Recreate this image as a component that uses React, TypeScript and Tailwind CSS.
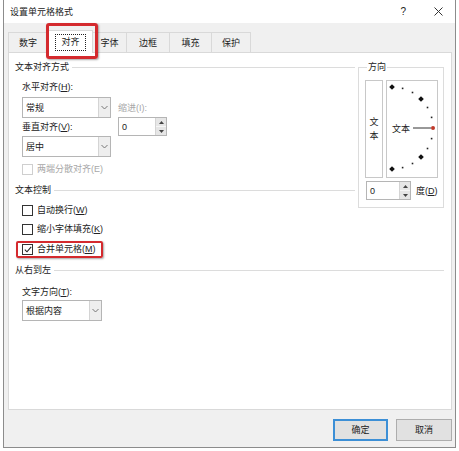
import React from 'react';

const tabs = ['数字', '对齐', '字体', '边框', '填充', '保护'];
const tabWidths = ['w-[40px]', 'w-[45px]', 'w-[34px]', 'w-[43px]', 'w-[42px]', 'w-[39px]'];

function Key({ k }: { k: string }) {
  return <span className="underline underline-offset-1">{k}</span>;
}

function Header({ text, className = '' }: { text: string; className?: string }) {
  return (
    <div className={`flex items-center h-[12px] ${className}`}>
      <span>{text}</span>
      <div className="ml-[3px] flex-1 h-px bg-[#dcdcdc]" />
    </div>
  );
}

function Chevron() {
  return (
    <svg width="7" height="5" viewBox="0 0 7 5">
      <path d="M0.5 1 L3.5 4 L6.5 1" fill="none" stroke="#777" strokeWidth="1" />
    </svg>
  );
}

function Select({ value, width }: { value: string; width: string }) {
  return (
    <div className={`flex ${width} h-[21px] border border-[#b5b5b5] bg-white`}>
      <div className="flex-1 flex items-center pl-[3px]">{value}</div>
      <div className="w-[12px] flex items-center justify-center bg-[#eeeeee] border-l border-[#d4d4d4]">
        <Chevron />
      </div>
    </div>
  );
}

function Spinner({ width }: { width: string }) {
  return (
    <div className={`flex ${width} h-[19px] border border-[#b5b5b5] bg-white`}>
      <div className="flex-1 flex items-center pl-[3px]">0</div>
      <div className="w-[11px] flex flex-col bg-[#e6e6e6] border-l border-[#d4d4d4]">
        <div className="flex-1 flex items-center justify-center border-b border-[#f6f6f6]">
          <svg width="5" height="3" viewBox="0 0 5 3"><path d="M0 3 L2.5 0 L5 3 Z" fill="#444" /></svg>
        </div>
        <div className="flex-1 flex items-center justify-center">
          <svg width="5" height="3" viewBox="0 0 5 3"><path d="M0 0 L2.5 3 L5 0 Z" fill="#444" /></svg>
        </div>
      </div>
    </div>
  );
}

function Check({ label, checked = false, disabled = false, className = '' }: { label: React.ReactNode; checked?: boolean; disabled?: boolean; className?: string }) {
  return (
    <div className={`flex items-center h-[12px] pl-[7px] ${disabled ? 'text-[#a8a8a8]' : ''} ${className}`}>
      <div className={`w-[11px] h-[11px] border bg-white flex items-center justify-center ${disabled ? 'border-[#cfcfcf]' : 'border-[#333]'}`}>
        {checked && (
          <svg width="8" height="7" viewBox="0 0 8 7">
            <path d="M0.8 3.6 L3 5.8 L7.2 0.8" fill="none" stroke="#222" strokeWidth="1.1" />
          </svg>
        )}
      </div>
      <span className="ml-[4px]">{label}</span>
    </div>
  );
}

function Dial() {
  const cx = 5;
  const cy = 47;
  const r = 41;
  const marks: React.ReactNode[] = [];
  for (let a = -90; a <= 90; a += 15) {
    const rad = (a * Math.PI) / 180;
    const x = cx + r * Math.cos(rad);
    const y = cy - r * Math.sin(rad);
    if (a === 0) {
      marks.push(<circle key={a} cx={x} cy={y} r={2} fill="#c0392b" />);
    } else if (a % 45 === 0) {
      marks.push(<rect key={a} x={x - 2} y={y - 2} width={4} height={4} fill="#111" transform={`rotate(45 ${x} ${y})`} />);
    } else {
      marks.push(<rect key={a} x={x - 0.8} y={y - 0.8} width={1.6} height={1.6} fill="#222" />);
    }
  }
  return (
    <svg width="50" height="96" viewBox="0 0 50 96">
      {marks}
      <text x="5" y="51" fontSize="9" fill="#222" fontFamily="Noto Sans CJK SC, sans-serif">文本</text>
      <line x1="26" y1="47" x2="44" y2="47" stroke="#333" strokeWidth="1" />
    </svg>
  );
}

export default function App() {
  return (
    <div className="w-[459px] h-[451px] bg-white text-[9px] leading-[12px] text-[#222] font-['Liberation_Sans','Noto_Sans_CJK_SC',sans-serif]">
      <div className="ml-[3px] w-[453px] h-[448px] flex flex-col bg-[#f0f0f0] border-x border-b border-[#8c8c8c]">
        {/* Title bar */}
        <div className="h-[23px] bg-white flex items-center pl-[6px] pr-[12px] shrink-0">
          <span className="flex-1">设置单元格格式</span>
          <span className="text-[10px] mr-[28px]">?</span>
          <svg width="9" height="9" viewBox="0 0 9 9">
            <path d="M0.5 0.5 L8.5 8.5 M8.5 0.5 L0.5 8.5" stroke="#333" strokeWidth="1" />
          </svg>
        </div>

        {/* Tabs */}
        <div className="flex items-end h-[22px] mt-[7px] pl-[4px] relative z-10">
          {tabs.map((t, i) =>
            i === 1 ? (
              <div key={t} className={`relative ${tabWidths[i]} h-[23px] -mb-px bg-white border-x border-t border-[#d9d9d9] flex items-center justify-center`}>
                <div className="px-[5px] h-[17px] flex items-center border border-dotted border-[#222]">{t}</div>
                <div className="absolute -left-[3px] -top-[8px] w-[52px] h-[36px] border-[3px] border-[#d42a2e] rounded-[3px] shadow-[1px_1px_2px_rgba(0,0,0,0.35)]" />
              </div>
            ) : (
              <div key={t} className={`${tabWidths[i]} h-[20px] bg-[#f0f0f0] border-t border-r border-[#d9d9d9] ${i === 0 ? 'border-l' : ''} flex items-center justify-center`}>
                {t}
              </div>
            )
          )}
        </div>

        {/* Panel */}
        <div className="ml-[4px] w-[444px] h-[358px] bg-white border border-[#d9d9d9] pt-[8px] pl-[6px] pr-[7px]">
          <div className="flex items-start">
            {/* Left column */}
            <div className="w-[340px]">
              <Header text="文本对齐方式" />
              <div className="flex mt-[8px] pl-[7px]">
                <div className="flex flex-col">
                  <div className="h-[12px]">水平对齐(<Key k="H" />):</div>
                  <div className="mt-[4px]"><Select value="常规" width="w-[89px]" /></div>
                  <div className="h-[12px] mt-[3px]">垂直对齐(<Key k="V" />):</div>
                  <div className="mt-[3px]"><Select value="居中" width="w-[89px]" /></div>
                </div>
                <div className="flex flex-col ml-[7px] pt-[21px]">
                  <div className="h-[12px] text-[#a8a8a8]">缩进(I):</div>
                  <div className="mt-[3px]"><Spinner width="w-[49px]" /></div>
                </div>
              </div>
              <Check label="两端分散对齐(E)" disabled className="mt-[6px]" />
              <Header text="文本控制" className="mt-[9px]" />
              <Check label={<>自动换行(<Key k="W" />)</>} className="mt-[8px]" />
              <Check label={<>缩小字体填充(<Key k="K" />)</>} className="mt-[7px]" />
              <div className="relative mt-[8px]">
                <Check label={<>合并单元格(<Key k="M" />)</>} checked />
                <div className="absolute left-[1px] -top-[2px] w-[87px] h-[17px] border-2 border-[#d42a2e] rounded-[2px] shadow-[1px_1px_2px_rgba(0,0,0,0.35)]" />
              </div>
            </div>

            {/* Orientation group */}
            <fieldset className="ml-[3px] w-[86px] border border-[#dcdcdc] pl-[6px] pt-[7px] pb-[7px]">
              <legend className="ml-[2px] px-[1px] h-[12px]">方向</legend>
              <div className="flex gap-[3px]">
                <div className="w-[18px] h-[98px] border border-[#c8c8c8] flex flex-col items-center justify-center leading-[14px]">
                  <span>文</span>
                  <span>本</span>
                </div>
                <div className="w-[52px] h-[98px] border border-[#c8c8c8]">
                  <Dial />
                </div>
              </div>
              <div className="flex items-center mt-[3px] pl-[1px]">
                <Spinner width="w-[45px]" />
                <span className="ml-[5px]">度(<Key k="D" />)</span>
              </div>
            </fieldset>
          </div>

          <Header text="从右到左" className="mt-[9px]" />
          <div className="pl-[7px]">
            <div className="h-[12px] mt-[10px]">文字方向(<Key k="T" />):</div>
            <div className="mt-[2px]"><Select value="根据内容" width="w-[80px]" /></div>
          </div>
        </div>

        {/* Buttons */}
        <div className="flex justify-end gap-[8px] mt-[9px] pr-[3px]">
          <button className="w-[55px] h-[22px] bg-[#e1e1e1] border-2 border-[#3c8fd6]">确定</button>
          <button className="w-[56px] h-[22px] bg-[#e1e1e1] border border-[#adadad]">取消</button>
        </div>
      </div>
    </div>
  );
}
